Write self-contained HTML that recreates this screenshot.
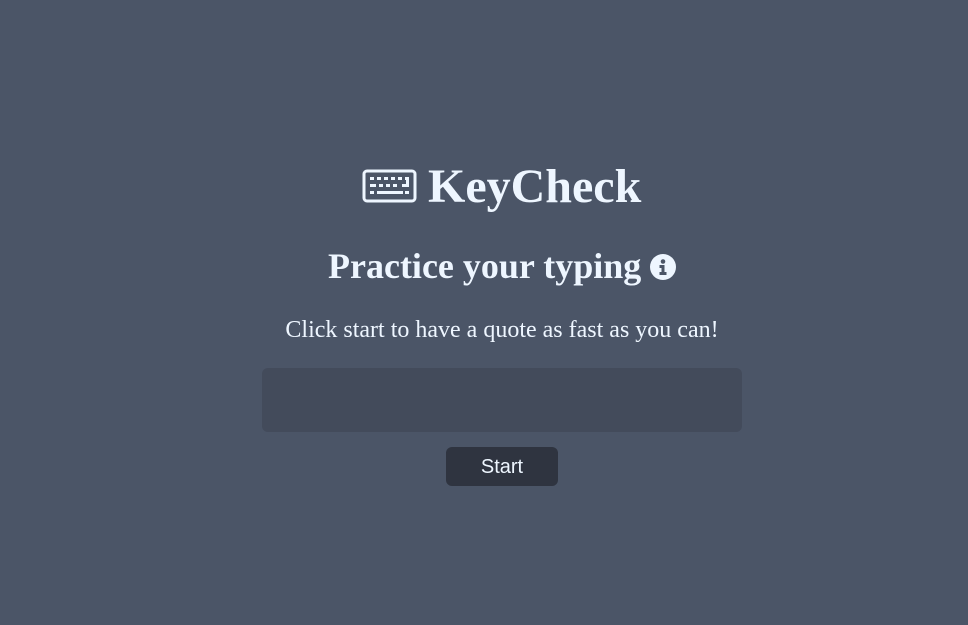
<!DOCTYPE html>
<html><head><style>
body{margin:0;width:968px;height:625px;background:#4b5567;color:#eef6ff;font-family:"Liberation Serif",serif;position:relative;overflow:hidden}
h1{position:absolute;top:157px;left:428px;margin:0;font-size:48px;font-weight:bold;line-height:60px}
h2{position:absolute;top:244px;left:328px;margin:0;font-size:36px;font-weight:bold;line-height:44px}
.p{position:absolute;top:315px;left:0;width:1004px;text-align:center;font-size:24px;line-height:30px}
.box{position:absolute;left:262px;top:368px;width:480px;height:64px;background:#434b5b;border-radius:6px}
.btn{position:absolute;left:446px;top:447px;width:112px;height:39px;background:#2f3440;border-radius:6px;color:#eef6ff;font-family:"Liberation Sans",sans-serif;font-size:20px;line-height:41px;text-align:center}
</style></head><body>
<svg style="position:absolute;left:362px;top:169px" width="55" height="34" viewBox="0 0 55 34">
<rect x="2" y="2" width="51" height="30" rx="3" fill="none" stroke="#eef6ff" stroke-width="3"/>
<g fill="#eef6ff">
<rect x="8" y="8" width="4" height="3"/><rect x="15" y="8" width="4" height="3"/><rect x="22" y="8" width="4" height="3"/><rect x="29" y="8" width="4" height="3"/><rect x="36" y="8" width="4" height="3"/><rect x="43" y="8" width="4" height="3"/>
<rect x="8" y="15" width="6" height="3"/><rect x="17" y="15" width="4" height="3"/><rect x="24" y="15" width="4" height="3"/><rect x="31" y="15" width="4" height="3"/><rect x="40" y="15" width="7" height="3"/><rect x="44" y="9" width="3" height="9"/>
<rect x="8" y="22" width="4" height="3"/><rect x="15" y="22" width="26" height="3"/><rect x="43" y="22" width="4" height="3"/>
</g></svg>
<h1>KeyCheck</h1>
<h2>Practice your typing</h2>
<svg style="position:absolute;left:650px;top:254px" width="26" height="26" viewBox="0 0 26 26">
<circle cx="13" cy="13" r="13" fill="#eef6ff"/>
<circle cx="13" cy="7.5" r="2.3" fill="#4b5567"/>
<path d="M9.5 11h5v7h2v3h-7v-3h2v-4h-2z" fill="#4b5567"/>
</svg>
<div class="p">Click start to have a quote as fast as you can!</div>
<div class="box"></div>
<div class="btn">Start</div>
</body></html>
